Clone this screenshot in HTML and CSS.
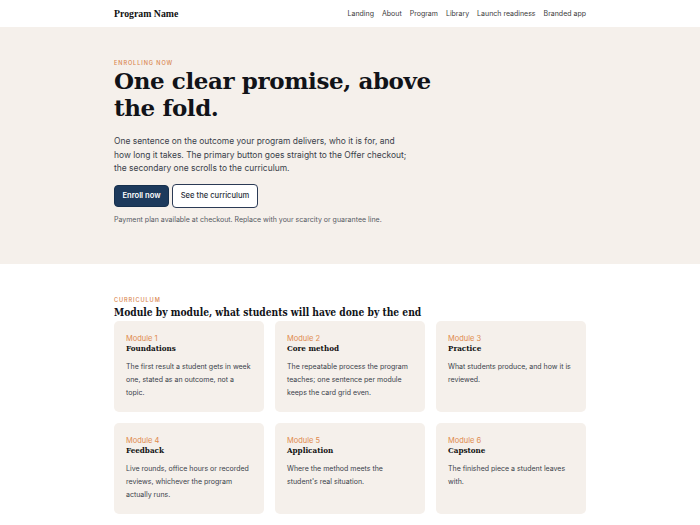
FILE: index.html
```html
<!DOCTYPE html>
<html>
<head>
<meta charset="utf-8">
<link rel="stylesheet" href="styles.css">
</head>
<body>
<header class="nav">
  <div class="wrap nav-inner">
    <div class="brand">Program Name</div>
    <nav class="links">
      <a>Landing</a><a>About</a><a>Program</a><a>Library</a><a>Launch readiness</a><a>Branded app</a>
    </nav>
  </div>
</header>
<section class="hero">
  <div class="wrap">
    <div class="eyebrow">ENROLLING NOW</div>
    <h1>One clear promise, above the fold.</h1>
    <p class="lead">One sentence on the outcome your program delivers, who it is for, and how long it takes. The primary button goes straight to the Offer checkout; the secondary one scrolls to the curriculum.</p>
    <div class="actions">
      <a class="btn primary">Enroll now</a>
      <a class="btn secondary">See the curriculum</a>
    </div>
    <p class="note">Payment plan available at checkout. Replace with your scarcity or guarantee line.</p>
  </div>
</section>
<section class="curriculum">
  <div class="wrap">
    <div class="eyebrow">CURRICULUM</div>
    <h2>Module by module, what students will have done by the end</h2>
    <div class="grid">
      <div class="card"><div class="mod">Module 1</div><h3>Foundations</h3><p>The first result a student gets in week one, stated as an outcome, not a topic.</p></div>
      <div class="card"><div class="mod">Module 2</div><h3>Core method</h3><p>The repeatable process the program teaches; one sentence per module keeps the card grid even.</p></div>
      <div class="card"><div class="mod">Module 3</div><h3>Practice</h3><p>What students produce, and how it is reviewed.</p></div>
      <div class="card"><div class="mod">Module 4</div><h3>Feedback</h3><p>Live rounds, office hours or recorded reviews, whichever the program actually runs.</p></div>
      <div class="card"><div class="mod">Module 5</div><h3>Application</h3><p>Where the method meets the student's real situation.</p></div>
      <div class="card"><div class="mod">Module 6</div><h3>Capstone</h3><p>The finished piece a student leaves with.</p></div>
    </div>
  </div>
</section>
</body>
</html>
```
FILE: styles.css
```css
* { box-sizing: border-box; }
body {
  margin: 0;
  font-family: Inter, "Noto Sans", sans-serif;
  color: #1f2430;
  background: #fff;
}
.wrap { width: 472px; margin: 0 auto; }
.nav { height: 27px; background: #fff; }
.nav-inner { height: 27px; display: flex; align-items: center; justify-content: space-between; }
.brand { font-family: "Liberation Serif", serif; font-weight: 700; font-size: 9.8px; color: #111; }
.links { display: flex; gap: 8px; }
.links a { font-size: 7px; color: #3a3a3a; }
.hero { background: #f5f0eb; padding: 33px 0 0; height: 237px; }
.eyebrow { font-size: 5.6px; line-height: 7px; letter-spacing: 0.9px; color: #d9864f; font-weight: 500; }
h1 {
  margin: 0;
  font-family: "DejaVu Serif", serif;
  font-weight: 700;
  font-size: 23px;
  line-height: 27px;
  color: #111318;
  width: 340px;
  letter-spacing: -0.4px;
}
.lead { margin: 14px 0 0; font-size: 8.45px; line-height: 13.5px; color: #3a3f4a; width: 293px; }
.actions { display: flex; gap: 3px; margin-top: 8px; align-items: center; }
.btn { display: inline-flex; align-items: center; justify-content: center; border-radius: 4px; font-size: 7.6px; font-weight: 600; }
.primary { background: #1d3a5c; color: #fff; height: 22px; width: 55px; border: 1px solid #16304d; }
.secondary { background: #fff; color: #2a2f3a; height: 24px; width: 86px; border: 1px solid #2b3a55; font-weight: 500; }
.note { margin: 8px 0 0; font-size: 7px; line-height: 8px; color: #555a63; }
.curriculum { padding: 33px 0 20px; }
h2 { margin: 2px 0 0; font-family: "DejaVu Serif Condensed", "DejaVu Serif", serif; font-stretch: condensed; font-weight: 700; font-size: 10.2px; color: #111318; }
.grid { display: grid; grid-template-columns: repeat(3, 150px); gap: 11px; margin-top: 3px; }
.card { background: #f5f0eb; border-radius: 5px; height: 91px; padding: 13px 12px; }
.mod { font-size: 7.5px; color: #e08a4e; }
h3 { margin: 0; font-family: "DejaVu Serif Condensed", "DejaVu Serif", serif; font-stretch: condensed; font-weight: 700; font-size: 8px; color: #111; }
.card p { margin: 7px 0 0; font-size: 7px; line-height: 13px; color: #3a3f4a; }
```
